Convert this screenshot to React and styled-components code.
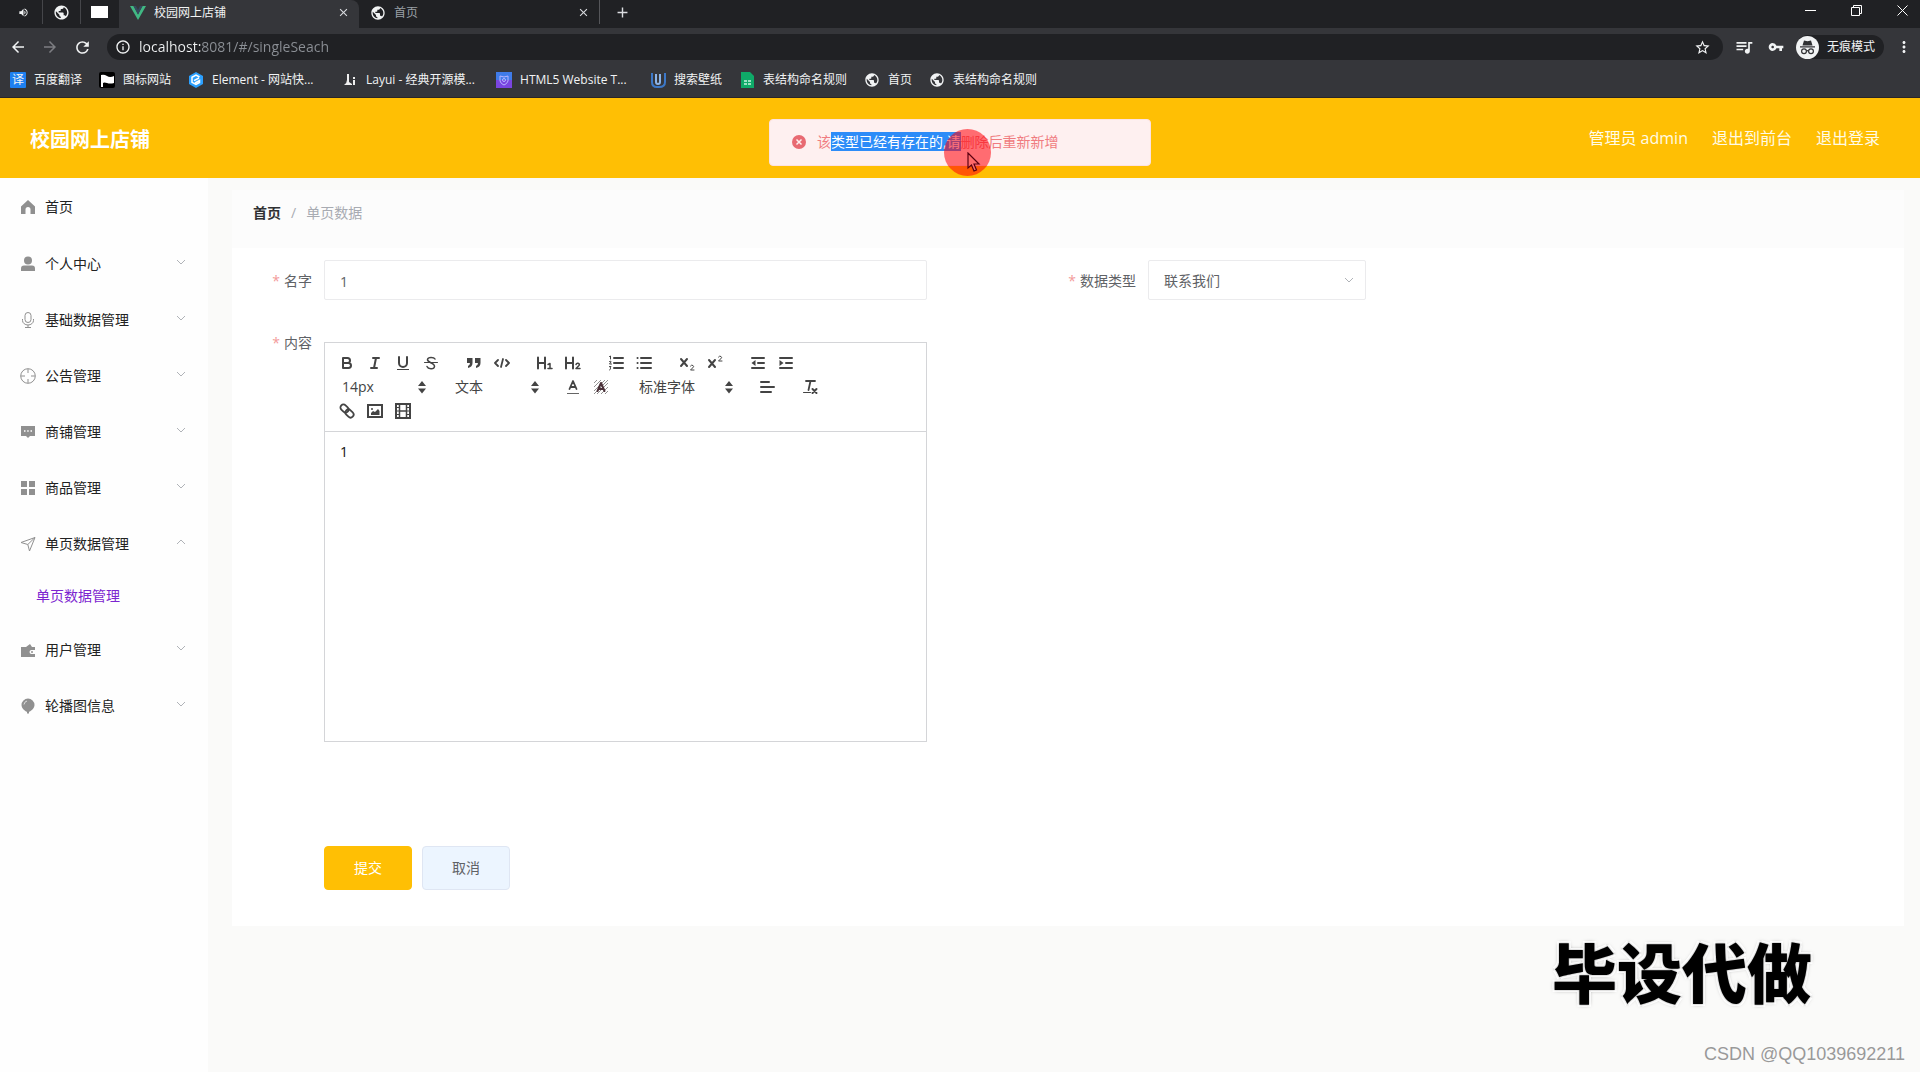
import styled, { createGlobalStyle } from "styled-components"
import {
    MdAdd, MdArrowBack, MdArrowForward, MdClose, MdInfoOutline, MdMoreVert, MdPublic,
    MdQueueMusic, MdRefresh, MdStarBorder, MdVolumeUp, MdVpnKey
} from "react-icons/md"

const GlobalStyle = createGlobalStyle`
    * {
        box-sizing: border-box;
    }
    body {
        margin: 0;
        background: #fafaf9;
        font-family: "Open Sans", "Noto Sans CJK SC", sans-serif;
        font-size: 14px;
        line-height: 20px;
        color: #303133;
    }
    button, input, select, textarea {
        font: inherit;
        color: inherit;
        margin: 0;
        padding: 0;
        border: 0;
        outline: 0;
        background: none;
    }
    a {
        color: inherit;
        text-decoration: none;
    }
    svg {
        display: block;
        flex: none;
    }
`

const Page = styled.div`
    position: relative;
    display: flex;
    flex-direction: column;
    min-height: 100vh;
`

/* ---------- browser ---------- */

const TabStrip = styled.div`
    display: flex;
    height: 28px;
    background: #202124;
    color: #e8eaed;
    font-size: 12px;
`
const PinnedTab = styled.button`
    display: flex;
    align-items: center;
    justify-content: center;
    width: 38px;
    height: 24px;
    border-right: 1px solid ${p => (p.$last ? "transparent" : "#45464a")};
    color: #f1f3f4;
    &:first-child {
        width: 43px;
        padding-left: 4px;
    }
`
const Tab = styled.div`
    display: flex;
    align-items: center;
    width: 240px;
    height: 28px;
    padding: 0 9px 3px 11px;
    gap: 8px;
    border-radius: 0 8px 0 0;
    background: ${p => (p.$active ? "#35363a" : "transparent")};
    color: ${p => (p.$active ? "#f1f3f4" : "#9aa0a6")};
    span {
        flex: 1;
    }
`
const TabButton = styled.button`
    display: flex;
    align-items: center;
    height: 24px;
    color: #dadce0;
`
const NewTab = styled(TabButton)`
    padding-left: 14px;
    border-left: 1px solid #55565a;
`
const WindowButtons = styled.div`
    display: flex;
    margin-left: auto;
    height: 20px;
    button {
        display: flex;
        align-items: center;
        justify-content: center;
        width: 46px;
    }
    button:last-child {
        width: 41px;
        padding-right: 12px;
        justify-content: flex-end;
    }
`
const Toolbar = styled.div`
    display: flex;
    align-items: center;
    height: 36px;
    padding: 2px 0 0 8px;
    background: #35363a;
    color: #f1f3f4;
    font-size: 12px;
`
const ToolButton = styled.button`
    display: flex;
    align-items: center;
    justify-content: center;
    width: 32px;
    height: 28px;
    color: ${p => (p.$dim ? "#7d7e82" : "#f1f3f4")};
`
const NavButtons = styled.div`
    display: flex;
    width: 99px;
    margin-left: -6px;
    padding-right: 2px;
`
const Address = styled.label`
    display: flex;
    align-items: center;
    flex: 1;
    height: 26px;
    margin: 0 5px 0 6px;
    padding: 0 12px 0 8px;
    gap: 8px;
    border-radius: 13px;
    background: #202124;
    input {
        flex: 1;
        font-size: 14px;
        color: transparent;
        background: linear-gradient(90deg, #f1f3f4 62px, #8c9096 62px);
        -webkit-background-clip: text;
        background-clip: text;
    }
`
const Incognito = styled.button`
    display: flex;
    align-items: center;
    height: 24px;
    margin: 0 4px;
    padding-right: 9px;
    gap: 8px;
    border-radius: 12px;
    background: #202124;
`
const Bookmarks = styled.nav`
    display: flex;
    align-items: center;
    height: 34px;
    padding: 0 10px 2px;
    gap: 17px;
    background: #35363a;
    border-bottom: 1px solid #2a2527;
    color: #f1f3f4;
    font-size: 12px;
`
const Bookmark = styled.a`
    display: flex;
    align-items: center;
    gap: 8px;
    width: ${p => (p.$full ? "137px" : "auto")};
    white-space: nowrap;
`
const Badge = styled.span`
    width: 16px;
    height: 16px;
    border-radius: 1px;
    background: #1e80f0;
    font-size: 12px;
    line-height: 16px;
    text-align: center;
`

/* ---------- application ---------- */

const Header = styled.header`
    display: flex;
    align-items: center;
    justify-content: space-between;
    height: 80px;
    padding: 0 40px 0 30px;
    background: #ffbf04;
    color: #fff;
    h1 {
        margin: 0;
        padding-top: 4px;
        font-size: 20px;
        line-height: 28px;
    }
`
const HeaderLinks = styled.div`
    display: flex;
    gap: 24px;
    font-size: 16px;
    color: #fffbe6;
`
const Body = styled.div`
    display: flex;
    flex: 1;
`
const Sidebar = styled.nav`
    width: 208px;
    background: #fefefe;
`
const MenuItem = styled.button`
    display: flex;
    align-items: center;
    width: 100%;
    height: 56px;
    padding: ${p => (p.$leaf ? "1px" : "4px")} 22px 0 20px;
    gap: 9px;
    color: #222;
    text-align: left;
    span {
        flex: 1;
    }
    > svg:first-child {
        color: #909090;
    }
    > svg:last-child {
        margin-bottom: 4px;
    }
`
const SubItem = styled.a`
    display: block;
    padding-left: 36px;
    line-height: 52px;
    height: 50px;
    color: #7c25d0;
`
const Main = styled.main`
    flex: 1;
    min-width: 0;
    padding: 12px 16px 40px 24px;
`
const Breadcrumb = styled.nav`
    display: flex;
    align-items: center;
    height: 58px;
    padding: 0 21px 12px;
    gap: 10px;
    background: #fcfcfc;
    color: #a8abb2;
    a {
        font-weight: 700;
        color: #303133;
    }
`
const Card = styled.form`
    padding: 12px 12px 36px;
    background: #fff;
`
const Columns = styled.div`
    display: grid;
    grid-template-columns: 1fr 1fr;
`
const Field = styled.div`
    display: flex;
    margin-bottom: 20px;
    > label {
        width: 80px;
        padding-right: 12px;
        line-height: 42px;
        text-align: right;
        color: #606266;
        &::before {
            content: "*";
            margin-right: 4px;
            color: #f39a9a;
        }
    }
`
const Control = styled.div`
    flex: 1;
    min-width: 0;
`
const TextInput = styled.input`
    display: block;
    width: 81%;
    height: 40px;
    padding: 2px 15px 0;
    border: 1px solid #ebebed;
    border-radius: 2px;
    color: #606266;
`
const SelectBox = styled.div`
    display: grid;
    align-items: center;
    width: ${p => p.$width};
    select, svg {
        grid-area: 1 / 1;
    }
    select {
        appearance: none;
        width: 100%;
    }
    svg {
        justify-self: end;
        pointer-events: none;
    }
`
const TypeSelect = styled(SelectBox)`
    height: 40px;
    color: #606266;
    select {
        height: 40px;
        padding: 2px 15px 0;
        border: 1px solid #ebebed;
        border-radius: 2px;
    }
    svg {
        margin-right: 12px;
    }
`
const Editor = styled.div`
    width: 81%;
    margin-top: 20px;
    border: 1px solid #d4d5d8;
    textarea {
        display: block;
        width: 100%;
        height: 309px;
        padding: 10px 15px;
        resize: none;
        color: #111;
    }
`
const EditorBar = styled.div`
    padding: 8px;
    border-bottom: 1px solid #d4d5d8;
`
const EditorRow = styled.div`
    display: flex;
    gap: 15px;
`
const Formats = styled.div`
    display: flex;
    height: 24px;
    color: #444;
    select {
        height: 24px;
        padding-left: 9px;
    }
    button {
        width: 28px;
        height: 24px;
        padding: 3px 5px;
    }
`
const Actions = styled.div`
    display: flex;
    gap: 10px;
    padding: 84px 0 0 80px;
`
const Action = styled.button`
    width: 88px;
    height: 44px;
    border: 1px solid ${p => (p.$primary ? "#ffbf04" : "#dfe6f3")};
    border-radius: 4px;
    background: ${p => (p.$primary ? "#ffbf04" : "#ecf5ff")};
    color: ${p => (p.$primary ? "#fff" : "#606266")};
`

/* ---------- overlays ---------- */

const Message = styled.div`
    position: absolute;
    top: 119px;
    left: 50%;
    transform: translateX(-50%);
    display: flex;
    align-items: center;
    min-width: 382px;
    height: 47px;
    padding: 0 20px 2px 21px;
    gap: 10px;
    border: 1px solid #fde2e2;
    border-radius: 4px;
    background: #fef0f0;
    color: #f07c80;
    p {
        margin: 0;
    }
    mark {
        background: #2d8cf8;
        color: #fff;
    }
`
const Pointer = styled.div`
    position: absolute;
    top: 9px;
    left: 174px;
    width: 47px;
    height: 47px;
    padding: 23px 0 0 23px;
    border-radius: 50%;
    background: rgba(255, 0, 10, 0.55);
`
const Stamp = styled.div`
    position: absolute;
    right: 108px;
    bottom: 62px;
    font: 900 65px/80px "Noto Sans CJK SC", sans-serif;
    color: #000;
    text-shadow: 0 0 2px #888, 2px 2px 0 #fff, -2px -2px 0 #fff, 2px -2px 0 #fff, -2px 2px 0 #fff, 0 0 4px #777;
`
const Credit = styled.div`
    position: absolute;
    right: 15px;
    bottom: 7px;
    font: 18px/22px "Liberation Sans", sans-serif;
    color: #999;
    text-shadow: 0 0 1px #fff;
`

const Chevron = ({ up, size = 10 }) => (
    <svg width={size} height={size} viewBox="0 0 10 10" fill="none" stroke="#b0b3b8">
        <path d={up ? "M1 7l4-4 4 4" : "M1 3l4 4 4-4"} />
    </svg>
)

const menuIcons = {
    home: <path fill="currentColor" d="M8 1L1 7.5V15h4.500v-4.500a2.500 2.500 0 0 1 5 0V15H15V7.500z" />,
    user: <g fill="currentColor"><circle cx="8" cy="4.500" r="4" /><path d="M1 15v-2.500Q1 9.500 4 9.500h8q3 0 3 3V15z" /></g>,
    mic: <g fill="none" stroke="currentColor"><rect x="5" y=".5" width="6" height="10" rx="3" /><path d="M2.500 7v1.500a5.500 4.500 0 0 0 11 0V7M8 13v2.500M5 15.500h6" /></g>,
    aim: <g fill="none" stroke="currentColor"><circle cx="8" cy="8" r="7.300" /><path d="M8 1v4M8 11v4M1 8h4M11 8h4" /></g>,
    shop: <g><path fill="currentColor" d="M1 2h14v10h-5l-2 2-2-2H1z" /><path stroke="#fff" strokeWidth="1.500" d="M4 7h1.500M7.200 7h1.500M10.500 7H12" /></g>,
    goods: <path fill="currentColor" d="M1 1h6v6H1zM9 1h6v6H9zM1 9h6v6H1zM9 9h6v6H9z" />,
    send: <path fill="none" stroke="currentColor" d="M1 6.500L15 1.500 9.500 15 7.800 8.500zM7.800 8.500L15 1.500" />,
    wallet: <g><path fill="currentColor" d="M1 5h5l4-3 2 3h3v3h-3.500a2 2 0 0 0 0 4H15v3H1z" /><circle cx="12" cy="10" r="1" fill="currentColor" /></g>,
    balloon: <g><path fill="currentColor" d="M8 .5a6.500 6.500 0 0 1 6.500 6.500c0 3-3 6-5.500 6.800V15.500H7v-1.700C4.500 13 1.500 10 1.500 7A6.500 6.500 0 0 1 8 .5z" /><path fill="none" stroke="#ddd" d="M4 6.500q.5-3 3-3.500" /></g>
}

const MenuIcon = ({ name }) => (
    <svg width="16" height="16" viewBox="0 0 16 16">{menuIcons[name]}</svg>
)

const line = { fill: "none", stroke: "currentColor", strokeWidth: 2, strokeLinecap: "round", strokeLinejoin: "round" }
const thin = { ...line, strokeWidth: 1 }

const formatIcons = {
    加粗: <path {...line} d="M5 4h4.500a2.500 2.500 0 0 1 0 5H5zM5 9h5.500a2.500 2.500 0 0 1 0 5H5z" />,
    斜体: <path {...line} d="M7 4h6M5 14h6M8 14l2-10" />,
    下划线: <g><path {...line} d="M5 3v6a4 4 0 0 0 8 0V3" /><rect fill="currentColor" x="3" y="15" width="12" height="1" /></g>,
    删除线: <g><path {...line} strokeWidth="1.500" d="M13 5C12 3 6 2.500 5.500 5.500S13 9 12.500 12.500 6 15 5 12.500" /><path {...thin} d="M2.500 8.500h13" /></g>,
    引用: <path fill="currentColor" d="M2 4h5.500v5q0 4-4.500 5v-2q2-1 2-3H2zM10 4h5.500v5q0 4-4.500 5v-2q2-1 2-3h-3z" />,
    代码: <path {...line} strokeWidth="1.800" d="M5 6L2 9l3 3M13 6l3 3-3 3M10 5L8 13" />,
    一级标题: <g><path {...line} d="M2 3.500v11M9 3.500v11M2 9h7" /><path {...line} strokeWidth="1.500" d="M12 10.500l2-1v5M12 14.500h4" /></g>,
    二级标题: <g><path {...line} d="M2 3.500v11M9 3.500v11M2 9h7" /><path {...line} strokeWidth="1.500" d="M12 10.500q.5-1.500 2-1.200 2 .5 1 2.200l-3 3h4" /></g>,
    有序列表: <g><path {...line} d="M7 4h9M7 9h9M7 14h9" /><path {...thin} d="M2.500 2.500l1-.5v3M2.500 7.500q2-1 1.500.5l-1.500 2H4.500M2.500 12.500h1.500l-1 1.500q2 .5-.5 2" /></g>,
    无序列表: <path {...line} d="M6 4h10M6 9h10M6 14h10M2.500 4h.1M2.500 9h.1M2.500 14h.1" />,
    下标: <g><path {...line} d="M3 5l6 7M9 5l-6 7" /><path {...thin} d="M12.500 12q1-1.500 2.500-.5t-.5 2.500l-2 2H16" /></g>,
    上标: <g><path {...line} d="M3 6l6 7M9 6l-6 7" /><path {...thin} d="M12.500 3q1-1.500 2.500-.5t-.5 2.500l-2 2H16" /></g>,
    减少缩进: <g><path {...line} d="M3 4h12M9 9h6M3 14h12" /><path fill="currentColor" d="M6.500 6v6L2.500 9z" /></g>,
    增加缩进: <g><path {...line} d="M3 4h12M9 9h6M3 14h12" /><path fill="currentColor" d="M2.500 6v6l4-3z" /></g>,
    文字颜色: <g><path {...line} strokeWidth="1.800" d="M5.500 11L9 3l3.500 8M6.500 9h5" /><rect fill="#666" x="3" y="15" width="12" height="1" /></g>,
    背景颜色: <g><path stroke="#777" strokeWidth=".8" d="M2 5l3-3M2 9l7-7M2 13L13 2M2 16L16 2M5 16L16 5M9 16l7-7M13 16l3-3" /><path {...line} stroke="#4a3038" d="M5.500 13L9 5l3.500 8M7 11h4" /></g>,
    对齐: <path {...line} d="M3 4h8M3 9h13M3 14h10" />,
    清除格式: <g><path {...line} strokeWidth="1.800" d="M5 3h9M9.500 3L7.500 12" /><path {...thin} d="M2.500 14.500h7" /><path {...line} d="M11.500 11l4 4M15.500 11l-4 4" /></g>,
    链接: <g {...line} strokeWidth="1.800"><rect x="2" y="3.500" width="9" height="6" rx="3" transform="rotate(45 6.500 6.500)" /><rect x="7" y="8.500" width="9" height="6" rx="3" transform="rotate(45 11.500 11.500)" /></g>,
    图片: <g><rect {...line} strokeLinejoin="miter" x="2" y="3" width="14" height="12" /><path fill="currentColor" d="M5 13V11l2-2 2 1 3-3 1.500 2V13z" /><circle cx="6" cy="7" r="1" fill="currentColor" /></g>,
    视频: <g><rect {...line} strokeLinejoin="miter" x="2" y="2" width="14" height="14" /><path {...line} strokeWidth="1.500" d="M5.500 3v12M12.500 3v12M6 9h6" /><path stroke="currentColor" d="M3 5.500h2M3 9h2M3 12.500h2M13 5.500h2M13 9h2M13 12.500h2" /></g>
}

const FormatGroup = ({ names }) => (
    <Formats>
        {names.map(name => (
            <button type="button" key={name} title={name} aria-label={name}>
                <svg width="18" height="18" viewBox="0 0 18 18">{formatIcons[name]}</svg>
            </button>
        ))}
    </Formats>
)

const FormatPicker = ({ label, value, width }) => (
    <Formats>
        <SelectBox $width={width}>
            <select aria-label={label} defaultValue={value}>
                <option>{value}</option>
            </select>
            <svg width="18" height="18" viewBox="0 0 18 18" fill="#444">
                <path d="M5 8l4-5 4 5zM5 10.500l4 5 4-5z" />
            </svg>
        </SelectBox>
    </Formats>
)

const bookmarks = [
    { text: "百度翻译", icon: <Badge>译</Badge> },
    { text: "图标网站", icon: <svg width="16" height="16" viewBox="0 0 16 16"><rect width="16" height="16" rx="2" fill="#000" /><path fill="#fff" d="M2 3q3-1 6 1t7 0v7q-4 1-7 0t-4 0v4H2z" /></svg> },
    { text: "Element - 网站快...", full: true, icon: <svg width="16" height="16" viewBox="0 0 16 16"><path fill="#2ba0ff" d="M8 0l7 4v8l-7 4-7-4V4z" /><path fill="none" stroke="#fff" strokeWidth="1.500" d="M11.500 5L8 3 4 5.300v5L8 12.500l3.500-2V8.500L7 11M11 6L6 8.700" /></svg> },
    { text: "Layui - 经典开源模...", full: true, icon: <svg width="16" height="16" viewBox="0 0 16 16" fill="#eee"><path d="M5 2h2v8l3 2v1H2q3-2 3-5zM11 8h2v5h-2zM11 5h2v2h-2z" /></svg> },
    { text: "HTML5 Website T...", full: true, icon: <svg width="16" height="16" viewBox="0 0 16 16"><rect width="16" height="8" fill="#3f7be8" /><rect y="8" width="16" height="8" fill="#7a45e0" /><path fill="none" stroke="#b8b5ff" d="M4 4l4 1 4-1v5q-1 3-4 4-3-1-4-4z" /><circle cx="8" cy="8" r="1.500" fill="none" stroke="#b8b5ff" /></svg> },
    { text: "搜索壁纸", icon: <svg width="16" height="16" viewBox="0 0 16 16" fill="none" strokeWidth="2"><path stroke="#3c78c8" d="M2 1v9q0 5 5 5h2q6 0 6-5V1" /><path stroke="#8cb4e8" d="M6 2v8q0 2 2 2t2-2V2" /></svg> },
    { text: "表结构命名规则", icon: <svg width="16" height="16" viewBox="0 0 16 16"><path fill="#0faa68" d="M2 0h9l4 4v12H2z" /><path stroke="#c8f5e0" strokeWidth="1.500" d="M5 9h3M9 9h3M5 12h3M9 12h3" /></svg> },
    { text: "首页", icon: <MdPublic size={16} /> },
    { text: "表结构命名规则", icon: <MdPublic size={16} /> }
]

const menu = [
    { text: "首页", icon: "home", leaf: true },
    { text: "个人中心", icon: "user" },
    { text: "基础数据管理", icon: "mic" },
    { text: "公告管理", icon: "aim" },
    { text: "商铺管理", icon: "shop" },
    { text: "商品管理", icon: "goods" },
    { text: "单页数据管理", icon: "send", children: ["单页数据管理"] },
    { text: "用户管理", icon: "wallet" },
    { text: "轮播图信息", icon: "balloon" }
]

const Browser = () => (
    <>
        <TabStrip>
            <PinnedTab aria-label="声音"><MdVolumeUp size={11} /></PinnedTab>
            <PinnedTab aria-label="网页"><MdPublic size={17} /></PinnedTab>
            <PinnedTab $last aria-label="空白页">
                <svg width="17" height="12"><rect width="17" height="12" fill="#fff" /></svg>
            </PinnedTab>
            <Tab $active>
                <svg width="16" height="16" viewBox="0 0 16 16">
                    <path fill="#41b883" d="M0 1h3.500L8 9.500 12.500 1H16L8 15z" />
                    <path fill="#35495e" d="M3.500 1H6l2 4 2-4h2.500L8 9.500z" />
                </svg>
                <span>校园网上店铺</span>
                <TabButton aria-label="关闭"><MdClose size={13} /></TabButton>
            </Tab>
            <Tab>
                <MdPublic size={16} color="#f1f3f4" />
                <span>首页</span>
                <TabButton aria-label="关闭"><MdClose size={13} /></TabButton>
            </Tab>
            <NewTab aria-label="新标签页"><MdAdd size={17} /></NewTab>
            <WindowButtons>
                <button aria-label="最小化"><svg width="11" height="11" stroke="#fff"><path d="M0 5.500h11" /></svg></button>
                <button aria-label="还原">
                    <svg width="11" height="11" fill="none" stroke="#fff"><path d="M.5 2.500h8v8h-8zM2.500 2.500v-2h8v8h-2" /></svg>
                </button>
                <button aria-label="关闭窗口"><svg width="11" height="11" stroke="#fff"><path d="M.5.5l10 10M10.500.5l-10 10" /></svg></button>
            </WindowButtons>
        </TabStrip>
        <Toolbar>
            <NavButtons>
                <ToolButton aria-label="后退"><MdArrowBack size={18} /></ToolButton>
                <ToolButton $dim aria-label="前进"><MdArrowForward size={18} /></ToolButton>
                <ToolButton aria-label="刷新"><MdRefresh size={19} /></ToolButton>
            </NavButtons>
            <Address>
                <MdInfoOutline size={16} />
                <input aria-label="地址" defaultValue="localhost:8081/#/singleSeach" />
                <MdStarBorder size={17} />
            </Address>
            <ToolButton aria-label="播放列表"><MdQueueMusic size={20} /></ToolButton>
            <ToolButton aria-label="密码"><MdVpnKey size={16} /></ToolButton>
            <Incognito>
                <svg width="23" height="23" viewBox="0 0 23 23">
                    <circle cx="11.500" cy="11.500" r="11.500" fill="#f1f3f4" />
                    <path fill="#303134" d="M8 4.500l3.500.7 3.500-.7 1.500 5h-10zM4 10.300h15v1.200H4z" />
                    <g fill="none" stroke="#303134" strokeWidth="1.200"><circle cx="8" cy="15.300" r="2.400" /><circle cx="15" cy="15.300" r="2.400" /><path d="M10.400 15q1.100-.8 2.200 0" /></g>
                </svg>
                无痕模式
            </Incognito>
            <ToolButton aria-label="菜单"><MdMoreVert size={18} /></ToolButton>
        </Toolbar>
        <Bookmarks>
            {bookmarks.map((b, i) => (
                <Bookmark href="#" key={i} $full={b.full}>{b.icon}{b.text}</Bookmark>
            ))}
        </Bookmarks>
    </>
)

const Menu = () => (
    <Sidebar>
        {menu.map(item => (
            <div key={item.text}>
                <MenuItem $leaf={item.leaf}>
                    <MenuIcon name={item.icon} />
                    <span>{item.text}</span>
                    {!item.leaf && <Chevron up={!!item.children} />}
                </MenuItem>
                {item.children?.map(child => <SubItem href="#" key={child}>{child}</SubItem>)}
            </div>
        ))}
    </Sidebar>
)

const SingleForm = () => (
    <Card onSubmit={e => e.preventDefault()}>
        <Columns>
            <Field>
                <label htmlFor="name">名字</label>
                <Control><TextInput id="name" defaultValue="1" /></Control>
            </Field>
            <Field>
                <label htmlFor="type">数据类型</label>
                <TypeSelect $width="218px">
                    <select id="type" defaultValue="联系我们">
                        <option>联系我们</option>
                    </select>
                    <Chevron />
                </TypeSelect>
            </Field>
            <Field>
                <label htmlFor="content">内容</label>
                <Control>
                    <Editor>
                        <EditorBar>
                            <EditorRow>
                                <FormatGroup names={["加粗", "斜体", "下划线", "删除线"]} />
                                <FormatGroup names={["引用", "代码"]} />
                                <FormatGroup names={["一级标题", "二级标题"]} />
                                <FormatGroup names={["有序列表", "无序列表"]} />
                                <FormatGroup names={["下标", "上标"]} />
                                <FormatGroup names={["减少缩进", "增加缩进"]} />
                            </EditorRow>
                            <EditorRow>
                                <FormatPicker label="字号" value="14px" width="98px" />
                                <FormatPicker label="段落" value="文本" width="98px" />
                                <FormatGroup names={["文字颜色", "背景颜色"]} />
                                <FormatPicker label="字体" value="标准字体" width="108px" />
                                <FormatGroup names={["对齐"]} />
                                <FormatGroup names={["清除格式"]} />
                            </EditorRow>
                            <EditorRow>
                                <FormatGroup names={["链接", "图片", "视频"]} />
                            </EditorRow>
                        </EditorBar>
                        <textarea id="content" defaultValue="1" />
                    </Editor>
                </Control>
            </Field>
        </Columns>
        <Actions>
            <Action $primary type="submit">提交</Action>
            <Action type="button">取消</Action>
        </Actions>
    </Card>
)

const App = () => {
    return (
        <Page>
            <GlobalStyle />
            <Browser />
            <Header>
                <h1>校园网上店铺</h1>
                <HeaderLinks>
                    <span>管理员 admin</span>
                    <a href="#">退出到前台</a>
                    <a href="#">退出登录</a>
                </HeaderLinks>
            </Header>
            <Body>
                <Menu />
                <Main>
                    <Breadcrumb>
                        <a href="#">首页</a>
                        <span>/</span>
                        <span>单页数据</span>
                    </Breadcrumb>
                    <SingleForm />
                </Main>
            </Body>
            <Message role="alert">
                <svg width="16" height="16" viewBox="0 0 16 16">
                    <circle cx="8" cy="8" r="7" fill="#e86a72" />
                    <path stroke="#fef0f0" strokeWidth="1.500" d="M5.500 5.500l5 5M10.500 5.500l-5 5" />
                </svg>
                <p>该<mark>类型已经有存在的,请</mark>删除后重新新增</p>
                <Pointer>
                    <svg width="14" height="21" viewBox="0 0 14 21">
                        <path fill="#ff6a6a" stroke="#5a0010" strokeWidth="1.200" d="M1 1v15l3.500-3 2.500 6 2.500-1-2.500-6h5z" />
                    </svg>
                </Pointer>
            </Message>
            <Stamp>毕设代做</Stamp>
            <Credit>CSDN @QQ1039692211</Credit>
        </Page>
    )
}
export default App
